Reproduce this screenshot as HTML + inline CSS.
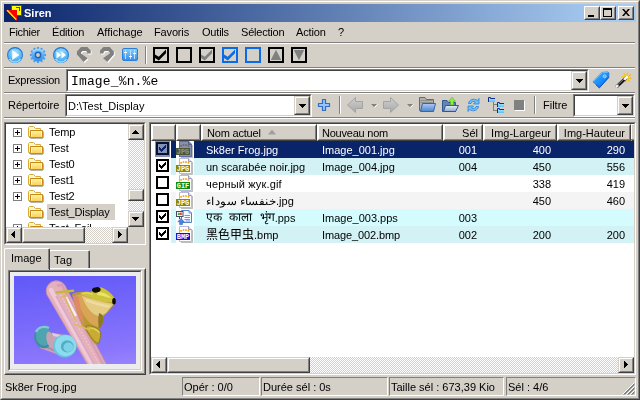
<!DOCTYPE html>
<html><head><meta charset="utf-8"><title>Siren</title>
<style>
*{box-sizing:border-box;margin:0;padding:0}
html,body{width:640px;height:400px;overflow:hidden;background:#d4d0c8}
body{position:relative;font-family:"Liberation Sans","Noto Sans CJK SC",sans-serif;font-size:11px;color:#000;line-height:13px}
.a{position:absolute}
.t{position:absolute;white-space:pre;line-height:13px;height:13px;will-change:transform}
/* frame */
#f1{left:0;top:0;width:640px;height:400px;border:1px solid;border-color:#d4d0c8 #404040 #404040 #d4d0c8}
#f2{left:1px;top:1px;width:638px;height:398px;border:1px solid;border-color:#fff #808080 #808080 #fff}
#title{left:4px;top:4px;width:632px;height:18px;background:linear-gradient(90deg,#0a246a 0%,#a6caf0 95%)}
.tb{position:absolute;top:6px;width:16px;height:14px;background:#d4d0c8;border:1px solid;border-color:#fff #404040 #404040 #fff}
.tb:after{content:"";position:absolute;left:0;top:0;right:0;bottom:0;border:1px solid;border-color:#d4d0c8 #808080 #808080 #d4d0c8}
.hl{position:absolute;height:2px;border-top:1px solid #808080;border-bottom:1px solid #fff}
.vl{position:absolute;width:2px;border-left:1px solid #808080;border-right:1px solid #fff}
.sunk{position:absolute;border:1px solid;border-color:#808080 #fff #fff #808080;background:#fff}
.sunk:before{content:"";position:absolute;left:0;top:0;right:0;bottom:0;border:1px solid;border-color:#404040 #d4d0c8 #d4d0c8 #404040;pointer-events:none}
.btn{position:absolute;background:#d4d0c8;border:1px solid;border-color:#d4d0c8 #404040 #404040 #d4d0c8}
.btn:before{content:"";position:absolute;left:0;top:0;right:0;bottom:0;border:1px solid;border-color:#fff #808080 #808080 #fff}
.trk{position:absolute;background-color:#fff;background-image:conic-gradient(#d4d0c8 25%,#fff 0 50%,#d4d0c8 0 75%,#fff 0);background-size:2px 2px}
.ar{position:absolute;width:0;height:0;border:4px solid transparent}
.stat{position:absolute;top:377px;height:19px;border:1px solid;border-color:#808080 #fff #fff #808080}
.cb{position:absolute;width:13px;height:13px;border:2px solid #000;background:#fff}
.row{position:absolute;left:151px;width:483px;height:17px}
.rc{position:absolute;top:0;height:17px}
</style></head><body>
<div class="a" id="f1"></div><div class="a" id="f2"></div>
<div class="a" id="title"></div>
<!--TITLE-->
<svg class="a" style="left:6px;top:5px" width="16" height="17" viewBox="0 0 16 17" shape-rendering="crispEdges"><rect x="5.5" y="0.5" width="10" height="10" fill="#ffff00" stroke="#ff0000"/><rect x="10" y="2" width="4" height="1" fill="#ff0000"/><rect x="13" y="2" width="1" height="4" fill="#ff0000"/><path d="M0 5H11V16Z" fill="#ff0000" shape-rendering="auto"/><path d="M1.2 5.3L10.2 14.6" stroke="#ffff00" stroke-width="1.3" shape-rendering="auto"/></svg>
<div class="t" style="left:24px;top:7px;color:#fff;font-weight:bold">Siren</div>
<div class="tb" style="left:584px"><i class="a" style="left:3px;top:8px;width:6px;height:2px;background:#000"></i></div>
<div class="tb" style="left:600px"><i class="a" style="left:2px;top:1px;width:9px;height:9px;border:1px solid #000;border-top-width:2px"></i></div>
<div class="tb" style="left:618px"><svg class="a" style="left:3px;top:2px" width="8" height="7" viewBox="0 0 8 7"><path d="M0 0h2l2 2.5L6 0h2L5 3.5 8 7H6L4 4.5 2 7H0l3-3.5z" fill="#000"/></svg></div>

<!--MENU-->
<div class="t" style="left:9px;top:26px;letter-spacing:-0.3px">Fichier</div>
<div class="t" style="left:52px;top:26px;letter-spacing:-0.2px">Édition</div>
<div class="t" style="left:97px;top:26px">Affichage</div>
<div class="t" style="left:154px;top:26px;letter-spacing:-0.15px">Favoris</div>
<div class="t" style="left:202px;top:26px;letter-spacing:-0.2px">Outils</div>
<div class="t" style="left:241px;top:26px;letter-spacing:-0.2px">Sélection</div>
<div class="t" style="left:296px;top:26px;letter-spacing:-0.15px">Action</div>
<div class="t" style="left:338px;top:26px">?</div>
<div class="hl" style="left:4px;top:42px;width:631px"></div>
<div class="hl" style="left:4px;top:67px;width:631px"></div>
<div class="hl" style="left:4px;top:92px;width:631px"></div>
<div class="hl" style="left:4px;top:117px;width:631px"></div>

<!--TOOLBAR1-->
<svg class="a" style="left:4px;top:44px" width="320" height="22" viewBox="0 0 320 22">
<defs>
<radialGradient id="gb" cx="0.5" cy="0.35" r="0.7"><stop offset="0" stop-color="#b0e4ff"/><stop offset="0.6" stop-color="#5cbaf6"/><stop offset="1" stop-color="#3498ea"/></radialGradient>
<linearGradient id="gb2" x1="0" y1="0" x2="0" y2="1"><stop offset="0" stop-color="#88d0ff"/><stop offset="1" stop-color="#348cea"/></linearGradient>
</defs>
<!-- play -->
<circle cx="11" cy="11" r="7.500" fill="url(#gb)" stroke="#2c84e0" stroke-width="1.100"/>
<path d="M4.500 7.500A7.500 7.500 0 0 1 17.500 7.500" fill="none" stroke="#1c6cd0" stroke-width="1" opacity="0.700"/>
<path d="M5.500 15A6.500 6.500 0 0 0 16.500 15" fill="none" stroke="#a8e4ff" stroke-width="1.400" opacity="0.900"/>
<path d="M8.500 6.500L15 11L8.500 15.500Z" fill="#fff" stroke="#eef8ff" stroke-width="0.600"/>
<!-- gear -->
<g transform="translate(34 11)">
<g fill="#4c9ef0"><rect x="-1.150" y="-8.100" width="2.300" height="16.200" rx="0.600" transform="rotate(0)"/><rect x="-1.150" y="-8.100" width="2.300" height="16.200" rx="0.600" transform="rotate(30)"/><rect x="-1.150" y="-8.100" width="2.300" height="16.200" rx="0.600" transform="rotate(60)"/><rect x="-1.150" y="-8.100" width="2.300" height="16.200" rx="0.600" transform="rotate(90)"/><rect x="-1.150" y="-8.100" width="2.300" height="16.200" rx="0.600" transform="rotate(120)"/><rect x="-1.150" y="-8.100" width="2.300" height="16.200" rx="0.600" transform="rotate(150)"/></g>
<circle r="6.300" fill="url(#gb2)"/><circle r="3.400" fill="#1c64bc"/><circle r="1.900" fill="#d4d0c8"/>
<path d="M-5 -3A6 6 0 0 1 5 -3" fill="none" stroke="#a8dcff" stroke-width="1.200" opacity="0.700"/>
</g>
<!-- ff -->
<circle cx="57" cy="11" r="7.500" fill="url(#gb)" stroke="#2c84e0" stroke-width="1.100"/>
<path d="M50.500 7.500A7.500 7.500 0 0 1 63.500 7.500" fill="none" stroke="#1c6cd0" stroke-width="1" opacity="0.700"/>
<path d="M51.500 15A6.500 6.500 0 0 0 62.500 15" fill="none" stroke="#a8e4ff" stroke-width="1.400" opacity="0.900"/>
<path d="M52.500 7.500L57 11L52.500 14.500ZM57.500 7.500L62 11L57.500 14.500Z" fill="#fff"/>
<!-- undo -->
<polygon points="72.9,7.5 77,3 83.4,3 86.75,6.4 86.75,9.6 83.2,9.6 83.2,8 82,7 78.5,7 77,8.5 77,9.6 83.75,14.25 79.6,18 72.9,10.5" fill="#fff" transform="translate(0.9 0.9)"/>
<polygon points="72.9,7.5 77,3 83.4,3 86.75,6.4 86.75,9.6 83.2,9.6 83.2,8 82,7 78.5,7 77,8.5 77,9.6 83.75,14.25 79.6,18 72.9,10.5" fill="#808080"/>
<polygon points="109.90,7.5 105.80,3.0 99.40,3.0 96.05,6.4 96.05,9.6 99.60,9.6 99.60,8.0 100.80,7.0 104.30,7.0 105.80,8.5 105.80,9.6 99.05,14.25 103.20,18.0 109.90,10.5" fill="#fff" transform="translate(0.9 0.9)"/>
<polygon points="109.90,7.5 105.80,3.0 99.40,3.0 96.05,6.4 96.05,9.6 99.60,9.6 99.60,8.0 100.80,7.0 104.30,7.0 105.80,8.5 105.80,9.6 99.05,14.25 103.20,18.0 109.90,10.5" fill="#808080"/>
<!-- settings -->
<rect x="118.5" y="4.5" width="15" height="12" rx="1.5" fill="url(#gb2)" stroke="#2a80d8"/>
<g stroke="#b8e0ff" stroke-width="1" shape-rendering="crispEdges"><path d="M121.500 6V15M126.500 6V15M130.500 6V15"/><path d="M120 8.500H123M125 12.500H128M129 9.500H132" stroke="#fff" stroke-width="1.600"/></g>
<!-- sep -->
<rect x="141" y="2" width="1" height="18" fill="#808080"/><rect x="142" y="2" width="1" height="18" fill="#fff"/>
<!-- checkboxes -->
<g fill="none" stroke="#000" stroke-width="2" shape-rendering="crispEdges">
<rect x="150" y="4" width="14" height="14"/><rect x="173" y="4" width="14" height="14"/><rect x="196" y="4" width="14" height="14"/>
<rect x="265" y="4" width="14" height="14"/><rect x="288" y="4" width="14" height="14"/>
<rect x="219" y="4" width="14" height="14" stroke="#0a6ae8"/><rect x="242" y="4" width="14" height="14" stroke="#0a6ae8"/>
</g>
<polygon points="151.0,10.4 154.8,12.7 162.0,5.5 162.0,9.2 154.8,16.5 151.0,14" fill="#000"/>
<polygon points="197.0,10.4 200.8,12.7 208.0,5.5 208.0,9.2 200.8,16.5 197.0,14" fill="#808080"/>
<polygon points="220.0,10.4 223.8,12.7 231.0,5.5 231.0,9.2 223.8,16.5 220.0,14" fill="#0a6ae8"/>
<path d="M266.800 16H277.200L272 5.800Z" fill="#808080"/>
<path d="M289.800 6H300.200L295 16.200Z" fill="#808080"/>
</svg>

<!--EXPR-->
<div class="t" style="left:8px;top:74px;letter-spacing:-0.25px">Expression</div>
<div class="sunk" style="left:66px;top:69px;width:523px;height:23px"></div>
<div class="t" style="left:71px;top:74px;letter-spacing:0.15px;font-family:'Liberation Mono',monospace;font-size:13px;line-height:15px;height:15px">Image_%n.%e</div>
<div class="btn" style="left:571px;top:71px;width:16px;height:19px"><svg class="a" style="left:4px;top:7px" width="7" height="4" fill="#000" shape-rendering="crispEdges"><rect x="0" y="0" width="7" height="1"/><rect x="1" y="1" width="5" height="1"/><rect x="2" y="2" width="3" height="1"/><rect x="3" y="3" width="1" height="1"/></svg></div>
<svg class="a" style="left:592px;top:71px" width="42" height="20" viewBox="0 0 42 20">
<defs><linearGradient id="tg" x1="0" y1="0" x2="1" y2="1"><stop offset="0" stop-color="#48b0ff"/><stop offset="0.5" stop-color="#1c90fc"/><stop offset="1" stop-color="#0860dc"/></linearGradient></defs>
<path d="M1 10.750L10 1.400L16 1L16.800 2.200V6.300L7.400 16.800Z" fill="url(#tg)" stroke="#1c70e0" stroke-width="0.800" stroke-linejoin="round"/>
<path d="M1.300 10.500L10.200 1.800L15.800 1.400" fill="none" stroke="#70c4ff" stroke-width="0.900"/>
<path d="M16.800 6.300L7.400 16.800L4 13.800" fill="none" stroke="#0848c8" stroke-width="0.900"/>
<circle cx="12.700" cy="5.300" r="1.500" fill="#58b0ff" stroke="#c8e8ff" stroke-width="0.700"/>
<path d="M36.07 6.70L39.11 7.31M35.43 7.65L37.14 10.23M34.30 7.87L33.69 10.91M33.35 7.23L30.77 8.94M33.13 6.10L30.09 5.49M33.77 5.15L32.06 2.57M34.90 4.93L35.51 1.89M35.85 5.57L38.43 3.86" stroke="#f8c020" stroke-width="1.400" stroke-linecap="round"/>
<circle cx="34.6" cy="6.4" r="2.600" fill="#f8c828"/>
<path d="M25 15.300L33.500 7.300" stroke="#181818" stroke-width="3.200" stroke-linecap="round"/>
<path d="M25.500 14L33 7" stroke="#8c8c8c" stroke-width="1"/>
<path d="M24.600 15.700L25.400 14.900" stroke="#f4f4f4" stroke-width="2.600" stroke-linecap="round"/>
<path d="M33 7.800L34.800 6.100" stroke="#fafafa" stroke-width="2.600" stroke-linecap="round"/>
</svg>

<!--DIR-->
<div class="t" style="left:8px;top:99px">Répertoire</div>
<div class="sunk" style="left:65px;top:94px;width:247px;height:23px"></div>
<div class="t" style="left:68px;top:100px">D:\Test_Display</div>
<div class="btn" style="left:294px;top:96px;width:16px;height:19px"><svg class="a" style="left:4px;top:7px" width="7" height="4" fill="#000" shape-rendering="crispEdges"><rect x="0" y="0" width="7" height="1"/><rect x="1" y="1" width="5" height="1"/><rect x="2" y="2" width="3" height="1"/><rect x="3" y="3" width="1" height="1"/></svg></div>
<svg class="a" style="left:314px;top:94px" width="226" height="22" viewBox="0 0 226 22">
<defs>
<linearGradient id="fg" x1="0" y1="0" x2="0" y2="1"><stop offset="0" stop-color="#b0ccf0"/><stop offset="1" stop-color="#4c84d0"/></linearGradient>
<linearGradient id="fg2" x1="0" y1="0" x2="0" y2="1"><stop offset="0" stop-color="#e8eef8"/><stop offset="1" stop-color="#8ca8d4"/></linearGradient><linearGradient id="ag" x1="0" y1="0" x2="0" y2="1"><stop offset="0" stop-color="#d0d0d0"/><stop offset="1" stop-color="#a8a8a8"/></linearGradient>
</defs>
<!-- plus -->
<path d="M8.500 5.500H11.500V9.500H15.500V12.500H11.500V16.500H8.500V12.500H4.500V9.500H8.500Z" fill="#98c4f8" stroke="#2e6cc8" stroke-width="1.200" stroke-linejoin="round"/>
<rect x="25" y="2" width="1" height="18" fill="#808080"/><rect x="26" y="2" width="1" height="18" fill="#fff"/>
<!-- back -->
<path d="M33.500 11L41.500 3.500V7.500H48.500V14.500H41.500V18.500Z" fill="url(#ag)" stroke="#a4a4a4" stroke-width="1"/>
<path d="M57 10H63L60 13Z" fill="#808080"/><path d="M60.5 13.5L63.5 10.5" stroke="#fff" stroke-width="1"/>
<!-- fwd -->
<path d="M84.500 11L76.500 3.500V7.500H69.500V14.500H76.500V18.500Z" fill="url(#ag)" stroke="#a4a4a4" stroke-width="1"/>
<path d="M93 10H99L96 13Z" fill="#808080"/><path d="M96.5 13.5L99.5 10.5" stroke="#fff" stroke-width="1"/>
<!-- folder -->
<path d="M105.500 3.500H111L112.500 5.500H119.500V16.500H105.500Z" fill="#b0b0b0" stroke="#686868"/>
<path d="M106.500 6.500H118.500M106.500 8.500H118.500" stroke="#909090" stroke-width="1"/>
<path d="M108.500 9.500H121.500L119.500 17.500H106.500Z" fill="url(#fg)" stroke="#3464b4"/>
<!-- folder up -->
<path d="M128.500 6.500H133L134.500 8.500H141.500V17.500H128.500Z" fill="#6484b4" stroke="#305890"/>
<path d="M131.500 11.500H144.500L141.500 17.500H129.500Z" fill="url(#fg2)" stroke="#305890"/>
<path d="M138 3.300L141.300 7.300H139.500V11H136.500V7.300H134.700Z" fill="#90f040" stroke="#48b020" stroke-width="0.600"/>
<!-- refresh -->
<path d="M154.5 9.5C155 5.5 160 4 163.5 6.5L165 4.5V10H159.5L161.5 8C159.5 7 157.5 7.5 157 9.5Z" fill="#70c0f8" stroke="#2a80d8" stroke-width="0.800"/>
<path d="M164.5 12.5C164 16.5 159 18 155.5 15.5L154 17.5V12H159.5L157.5 14C159.5 15 161.5 14.5 162 12.500Z" fill="#70c0f8" stroke="#2a80d8" stroke-width="0.800"/>
<!-- tree -->
<path d="M179.500 8V16.500M179.500 10.500H183M179.500 16H183" stroke="#808080" fill="none" shape-rendering="crispEdges"/>
<rect x="175" y="4.5" width="6" height="3.500" fill="#8cdcff"/><rect x="175" y="6.5" width="6" height="1.500" fill="#68c4f8"/><path d="M174.5 8V3.5H176.5V4.5H181" fill="none" stroke="#0a2ca0" stroke-width="1"/><rect x="184" y="9.5" width="6" height="3.500" fill="#8cdcff"/><rect x="184" y="11.5" width="6" height="1.500" fill="#68c4f8"/><path d="M183.5 13V8.5H185.5V9.5H190" fill="none" stroke="#0a2ca0" stroke-width="1"/><rect x="184" y="15.5" width="6" height="3.500" fill="#8cdcff"/><rect x="184" y="17.5" width="6" height="1.500" fill="#68c4f8"/><path d="M183.5 19V14.5H185.5V15.5H190" fill="none" stroke="#0a2ca0" stroke-width="1"/>
<!-- stop -->
<rect x="201" y="7" width="10" height="10" fill="#fff"/><rect x="200" y="6" width="10" height="10" fill="#808080"/>
<rect x="220" y="2" width="1" height="18" fill="#808080"/><rect x="221" y="2" width="1" height="18" fill="#fff"/>
</svg>
<div class="t" style="left:543px;top:99px">Filtre</div>
<div class="sunk" style="left:573px;top:94px;width:62px;height:23px"></div>
<div class="btn" style="left:617px;top:96px;width:16px;height:19px"><svg class="a" style="left:4px;top:7px" width="7" height="4" fill="#000" shape-rendering="crispEdges"><rect x="0" y="0" width="7" height="1"/><rect x="1" y="1" width="5" height="1"/><rect x="2" y="2" width="3" height="1"/><rect x="3" y="3" width="1" height="1"/></svg></div>

<!--TREE-->
<svg width="0" height="0" style="position:absolute"><defs>
<linearGradient id="fy" x1="0" y1="0" x2="0" y2="1"><stop offset="0" stop-color="#fff4a8"/><stop offset="1" stop-color="#f8d050"/></linearGradient>
<g id="fold"><path d="M0.500 11.500V2.500L1.500 1.500H5.500L7.500 3.500H12.500V6.500H2.500V12Z" fill="#fff6c0" stroke="#dcaa3c" stroke-linejoin="round"/><path d="M2.500 5.500H14.500V12.500H1.500L2.500 11Z" fill="url(#fy)" stroke="#c48c1c" stroke-linejoin="round"/><path d="M3.500 6.500V11.500M13.500 6.500V11.500" stroke="#fffbe0" stroke-width="1" opacity="0.800"/><path d="M2.500 13.500H15M15.500 6.500V13" stroke="#807868" stroke-width="1" opacity="0.550"/></g>
<g id="plus"><rect x="0.500" y="0.500" width="8" height="8" fill="#fff" stroke="#808080"/><path d="M2 4.500H7M4.500 2V7" stroke="#000"/></g>
</defs></svg>
<div class="sunk" style="left:4px;top:122px;width:142px;height:123px"></div>
<div class="a" style="left:6px;top:124px;width:122px;height:103px;overflow:hidden;background:#fff">
<svg class="a" style="left:7px;top:4px" width="9" height="9"><use href="#plus"/></svg><svg class="a" style="left:22px;top:1px" width="16" height="14" viewBox="0 0 16 14"><use href="#fold"/></svg><div class="t" style="left:43px;top:2px;letter-spacing:-0.15px">Temp</div><svg class="a" style="left:7px;top:20px" width="9" height="9"><use href="#plus"/></svg><svg class="a" style="left:22px;top:17px" width="16" height="14" viewBox="0 0 16 14"><use href="#fold"/></svg><div class="t" style="left:43px;top:18px;letter-spacing:-0.15px">Test</div><svg class="a" style="left:7px;top:36px" width="9" height="9"><use href="#plus"/></svg><svg class="a" style="left:22px;top:33px" width="16" height="14" viewBox="0 0 16 14"><use href="#fold"/></svg><div class="t" style="left:43px;top:34px;letter-spacing:-0.15px">Test0</div><svg class="a" style="left:7px;top:52px" width="9" height="9"><use href="#plus"/></svg><svg class="a" style="left:22px;top:49px" width="16" height="14" viewBox="0 0 16 14"><use href="#fold"/></svg><div class="t" style="left:43px;top:50px;letter-spacing:-0.15px">Test1</div><svg class="a" style="left:7px;top:68px" width="9" height="9"><use href="#plus"/></svg><svg class="a" style="left:22px;top:65px" width="16" height="14" viewBox="0 0 16 14"><use href="#fold"/></svg><div class="t" style="left:43px;top:66px;letter-spacing:-0.15px">Test2</div><svg class="a" style="left:22px;top:81px" width="16" height="14" viewBox="0 0 16 14"><use href="#fold"/></svg><div class="a" style="left:41px;top:80px;width:68px;height:16px;background:#d4d0c8"></div><div class="t" style="left:43px;top:82px;letter-spacing:-0.15px">Test_Display</div><svg class="a" style="left:7px;top:100px" width="9" height="9"><use href="#plus"/></svg><svg class="a" style="left:22px;top:97px" width="16" height="14" viewBox="0 0 16 14"><use href="#fold"/></svg><div class="t" style="left:43px;top:98px;letter-spacing:-0.15px">Test_Fail</div></div>
<div class="trk" style="left:128px;top:124px;width:16px;height:103px"></div>
<div class="btn" style="left:128px;top:124px;width:16px;height:16px"><svg class="a" style="left:3px;top:5px" width="7" height="4" fill="#000" shape-rendering="crispEdges"><rect x="3" y="0" width="1" height="1"/><rect x="2" y="1" width="3" height="1"/><rect x="1" y="2" width="5" height="1"/><rect x="0" y="3" width="7" height="1"/></svg></div>
<div class="btn" style="left:128px;top:189px;width:16px;height:12px"></div>
<div class="btn" style="left:128px;top:211px;width:16px;height:16px"><svg class="a" style="left:3px;top:5px" width="7" height="4" fill="#000" shape-rendering="crispEdges"><rect x="0" y="0" width="7" height="1"/><rect x="1" y="1" width="5" height="1"/><rect x="2" y="2" width="3" height="1"/><rect x="3" y="3" width="1" height="1"/></svg></div>
<div class="trk" style="left:6px;top:227px;width:122px;height:16px"></div>
<div class="btn" style="left:6px;top:227px;width:16px;height:16px"><svg class="a" style="left:4px;top:3px" width="4" height="7" fill="#000" shape-rendering="crispEdges"><rect x="3" y="0" width="1" height="7"/><rect x="2" y="1" width="1" height="5"/><rect x="1" y="2" width="1" height="3"/><rect x="0" y="3" width="1" height="1"/></svg></div>
<div class="btn" style="left:22px;top:227px;width:63px;height:16px"></div>
<div class="btn" style="left:112px;top:227px;width:16px;height:16px"><svg class="a" style="left:5px;top:3px" width="4" height="7" fill="#000" shape-rendering="crispEdges"><rect x="0" y="0" width="1" height="7"/><rect x="1" y="1" width="1" height="5"/><rect x="2" y="2" width="1" height="3"/><rect x="3" y="3" width="1" height="1"/></svg></div>
<div class="a" style="left:128px;top:227px;width:16px;height:16px;background:#d4d0c8"></div>

<!--TABS-->
<!-- tab body -->
<div class="a" style="left:4px;top:268px;width:142px;height:107px;border:1px solid;border-color:#fff #404040 #404040 #fff"></div>
<div class="a" style="left:5px;top:269px;width:140px;height:105px;border:1px solid;border-color:#d4d0c8 #808080 #808080 #d4d0c8"></div>
<!-- tab Tag -->
<div class="a" style="left:49px;top:250px;width:41px;height:18px;border:1px solid;border-color:#fff #404040 transparent #fff;border-bottom:0;border-radius:2px 2px 0 0"></div>
<div class="a" style="left:50px;top:251px;width:39px;height:17px;border-right:1px solid #808080"></div>
<div class="t" style="left:53.500px;top:254px;letter-spacing:0.2px">Tag</div>
<!-- tab Image (selected) -->
<div class="a" style="left:4px;top:248px;width:46px;height:22px;background:#d4d0c8;border:1px solid;border-color:#fff #404040 transparent #fff;border-bottom:0;border-radius:2px 2px 0 0"></div>
<div class="a" style="left:5px;top:249px;width:44px;height:20px;border-right:1px solid #808080"></div>
<div class="t" style="left:11px;top:252px">Image</div>
<!-- inner sunken -->
<div class="a" style="left:8px;top:270px;width:134px;height:101px;border:1px solid;border-color:#808080 #fff #fff #808080"></div>
<div class="a" style="left:9px;top:271px;width:132px;height:99px;border:1px solid;border-color:#404040 #d4d0c8 #d4d0c8 #404040;background:#ececec"></div>
<svg class="a" style="left:14px;top:276px" width="122" height="88" viewBox="0 0 122 88">
<defs>
<linearGradient id="bg1" x1="0" y1="0" x2="0.217" y2="1.26"><stop offset="0" stop-color="#6058f8"/><stop offset="0.75" stop-color="#8a76fc"/><stop offset="1" stop-color="#a08cfc"/></linearGradient>
<linearGradient id="bd" x1="0" y1="0" x2="1" y2="0"><stop offset="0" stop-color="#f0b8c8"/><stop offset="0.5" stop-color="#e8a0b4"/><stop offset="1" stop-color="#d8a0b8"/></linearGradient>
<radialGradient id="wh" cx="0.45" cy="0.45" r="0.6"><stop offset="0" stop-color="#58a8d8"/><stop offset="0.35" stop-color="#8cd4f4"/><stop offset="1" stop-color="#a4e0fc"/></radialGradient>
<filter id="bl"><feGaussianBlur stdDeviation="0.5"/></filter>
</defs>
<rect width="122" height="88" fill="url(#bg1)"/>
<g filter="url(#bl)">
<!-- board -->
<path d="M32.800 18.500L79.500 98.800L93.800 91.200L50.700 9.100A10.200 10.200 0 0 0 32.800 18.500Z" fill="#e4b0bc" stroke="#c090b0" stroke-width="1"/>
<path d="M37 14L80 92" stroke="#f2d0e0" stroke-width="4.500" stroke-linecap="round" opacity="0.800"/>
<path d="M43 9.500L48 9L90 90" stroke="#d498b4" stroke-width="2.500" fill="none" opacity="0.800"/>
<path d="M42 20L81 90" stroke="#cc90b0" stroke-width="1.500" fill="none" opacity="0.600"/>
<path d="M45 16L86 90" stroke="#f4dce8" stroke-width="1" stroke-dasharray="1.500 2" fill="none" opacity="0.800"/>
<!-- axle -->
<path d="M30 55L50 59L45 79L26 72Z" fill="#c8a4b8"/>
<path d="M32 57L49 61" stroke="#e4ccd8" stroke-width="2.500"/>
<path d="M28 69L44 76" stroke="#b08ca8" stroke-width="2"/>
<!-- wheels -->
<ellipse cx="29.500" cy="61.500" rx="9.300" ry="10.800" fill="#3e8e9c" transform="rotate(-10 29.500 61.500)"/>
<ellipse cx="30" cy="60.500" rx="8" ry="9.300" fill="#50a4b0" transform="rotate(-10 30 60.500)"/>
<path d="M22 56C24 51 30 49.500 35 52" stroke="#7cccd4" stroke-width="2.200" fill="none"/>
<ellipse cx="36.500" cy="64" rx="3.800" ry="8.500" fill="#c4a4b4" transform="rotate(-14 36.500 64)"/>
<ellipse cx="50.800" cy="69.900" rx="11.800" ry="11.500" fill="#6cc4dc"/>
<ellipse cx="51.600" cy="69.600" rx="10.600" ry="10.600" fill="#8cdcf0"/>
<ellipse cx="53.300" cy="70.400" rx="6.400" ry="6.200" fill="#56acc6"/>
<ellipse cx="54.400" cy="71.300" rx="4.900" ry="4.700" fill="#7cd2e6"/>
<!-- frog -->
<path d="M58 18C62 15.500 70 15 77 16.500C78 11.500 85 9.500 90 12.500C96 15.500 101.500 21 101.500 26C100.500 29.500 98 31 96.500 33C94.500 37 90 38 89.500 42C89 46 88.500 50 85 53C86.500 58 86 63 84.500 67C83 69.500 81 68.500 79 66C76 62 74 58 71.500 54C67 48 62 36 58 18Z" fill="#b89830"/>
<path d="M62 19C66 17.500 72 17.500 77 19C83 21 88 24 90 30C90 38 88 46 84 51C78 50 72 44 68 36C65 30 63 24 62 19Z" fill="#d8a454"/>
<path d="M66 17.500C70 15.500 75 15.500 77 16.500C79 11.500 86 10 90.500 13C96 16 101.500 21.500 101 26C96 27.500 86 26 78 22.500C74 21 70 19.500 66 17.500Z" fill="#ccc43c"/>
<path d="M84 16C89 15.500 94 18.500 98 22.500C93.500 21 88 19.500 83 19Z" fill="#ece468"/><path d="M68 17.500C72 16.500 76 17 79 18.500" stroke="#e4dc5c" stroke-width="1.200" fill="none"/>
<path d="M68 20C76 22.500 90 27 99.500 27.500C98 30.500 96 32 94.500 34C92 38 88 40 84 40C78 38 72 32 68 20Z" fill="#e4cc84"/><path d="M72 24C80 27 90 30 96 30.500" stroke="#f0e0a4" stroke-width="2.500" fill="none" opacity="0.800"/>
<path d="M58.500 19.500C60.500 31 65 41 71 51C69.500 43 66 31 64.500 21Z" fill="#e08a64"/>
<path d="M85 37C88 38 90 40 89.500 43C89 47 88 50 85 53C84 48 84 42 85 37Z" fill="#8a7a24"/>
<path d="M72 50C76 49 84 51 86.500 56C87 61 86 65 84 67.500C80 66 76 60 72.500 54Z" fill="#c8ac30" stroke="#84701c" stroke-width="0.800"/>
<path d="M75 52C79 52 84 54 85.500 57" stroke="#e8d460" stroke-width="1.200" fill="none"/>
<ellipse cx="82.300" cy="13.800" rx="4.400" ry="2.700" fill="#100c06" transform="rotate(-10 82.300 13.800)"/>
<ellipse cx="100" cy="25.300" rx="1.800" ry="3.200" fill="#100c06"/>
<path d="M52 21L62 40" stroke="#fff4f4" stroke-width="2.600" fill="none" opacity="0.900"/><path d="M42.500 16.500L59 14.800" stroke="#c8b834" stroke-width="2.600" stroke-linecap="round" fill="none"/><path d="M46 22L53 19M50 19L62 46M60 48L76 54" stroke="#dcb860" stroke-width="1.600" fill="none"/>
</g>
</svg>

<!--LIST-->
<svg width="0" height="0" style="position:absolute"><defs>
<g id="page"><path d="M3.500 0.500H12.500L15.500 3.500V15.500H3.500Z" fill="#fff" stroke="#b8b8d8"/><path d="M12.500 0.500V3.500H15.500" fill="#e0e0f0" stroke="#9898b8"/><path d="M16.500 4V16.500H5" stroke="#909090" fill="none" opacity="0.600"/><g fill="#f8a010"><rect x="4.300" y="4" width="1.600" height="1.700"/><rect x="6.700" y="3.200" width="1.600" height="1.700"/><rect x="9.200" y="3.200" width="1.600" height="1.700"/><rect x="11.700" y="4" width="1.600" height="1.700"/></g></g>
</defs></svg>
<div class="sunk" style="left:149px;top:122px;width:487px;height:253px"></div>
<!-- header -->
<div class="a" style="left:151px;top:124px;width:483px;height:17px;background:#d4d0c8"></div>
<div class="btn" style="left:151px;top:124px;width:25px;height:17px;border-color:#fff #404040 #404040 #fff"></div><div class="btn" style="left:176px;top:124px;width:25px;height:17px;border-color:#fff #404040 #404040 #fff"></div><div class="btn" style="left:201px;top:124px;width:116px;height:17px;border-color:#fff #404040 #404040 #fff"></div><div class="btn" style="left:317px;top:124px;width:126px;height:17px;border-color:#fff #404040 #404040 #fff"></div><div class="btn" style="left:443px;top:124px;width:40px;height:17px;border-color:#fff #404040 #404040 #fff"></div><div class="btn" style="left:483px;top:124px;width:74px;height:17px;border-color:#fff #404040 #404040 #fff"></div><div class="btn" style="left:557px;top:124px;width:74px;height:17px;border-color:#fff #404040 #404040 #fff"></div><div class="a" style="left:631px;top:124px;width:3px;height:17px;border-top:1px solid #fff;border-left:1px solid #fff;border-bottom:1px solid #404040"></div><div class="a" style="left:631px;top:139px;width:3px;height:1px;background:#808080"></div><div class="t" style="left:206.500px;top:127px;letter-spacing:-0.2px">Nom actuel</div>
<div class="t" style="left:322px;top:127px;letter-spacing:-0.22px">Nouveau nom</div>
<div class="t" style="left:443px;top:127px;width:35px;text-align:right">Sél</div>
<div class="t" style="left:483px;top:127px;width:68px;text-align:right">Img-Largeur</div>
<div class="t" style="left:557px;top:127px;width:68px;text-align:right">Img-Hauteur</div>
<svg class="a" style="left:267px;top:129px" width="10" height="6"><path d="M1 5.500L5 0.500L9 5.500Z" fill="#a0a0a0"/></svg>
<div class="row" style="top:141px;color:#fff"><div class="rc" style="left:20px;width:5px;background:#0a246a"></div><div class="rc" style="left:43px;width:440px;background:#0a246a"></div><div class="rc" style="left:4px;width:15px;height:16px;background:#8491b4"></div><div class="cb" style="left:5px;top:1px;border-color:#051235;background:#8491b4"><svg class="a" style="left:1px;top:1px" width="7" height="7" shape-rendering="crispEdges"><polygon points="0,2 1,2 1,3 2,3 2,4 3,4 3,3 4,3 4,2 5,2 5,1 6,1 6,0 7,0 7,3 6,3 6,4 5,4 5,5 4,5 4,6 3,6 3,7 2,7 2,6 1,6 1,5 0,5" fill="#0a246a"/></svg></div><svg class="a" style="left:25px;top:0" width="18" height="17" viewBox="0 0 18 17"><g><use href="#page"/><rect x="0" y="7" width="14" height="7" fill="#8a8a00"/><text x="7" y="13" font-family="Liberation Mono,monospace" font-size="7.500" font-weight="bold" fill="#fff" text-anchor="middle" textLength="12.500" lengthAdjust="spacingAndGlyphs">JPG</text><path d="M3 0H13L16 3V16H3V14H0V7H3Z" fill="#0a246a" opacity="0.5"/></g></svg><div class="t" style="left:55.400px;top:3px">Sk8er Frog.jpg</div><div class="t" style="left:171px;top:3px">Image_001.jpg</div><div class="t" style="left:292px;top:3px;width:34px;text-align:right">001</div><div class="t" style="left:332px;top:3px;width:68px;text-align:right">400</div><div class="t" style="left:406px;top:3px;width:68px;text-align:right">290</div></div>
<div class="row" style="top:158px;color:#000"><div class="rc" style="left:20px;width:5px;background:#d2f2f5"></div><div class="rc" style="left:43px;width:440px;background:#d2f2f5"></div><div class="cb" style="left:5px;top:1px;border-color:#000;background:#fff"><svg class="a" style="left:1px;top:1px" width="7" height="7" shape-rendering="crispEdges"><polygon points="0,2 1,2 1,3 2,3 2,4 3,4 3,3 4,3 4,2 5,2 5,1 6,1 6,0 7,0 7,3 6,3 6,4 5,4 5,5 4,5 4,6 3,6 3,7 2,7 2,6 1,6 1,5 0,5" fill="#000"/></svg></div><svg class="a" style="left:25px;top:0" width="18" height="17" viewBox="0 0 18 17"><g><use href="#page"/><rect x="0" y="7" width="14" height="7" fill="#8a8a00"/><text x="7" y="13" font-family="Liberation Mono,monospace" font-size="7.500" font-weight="bold" fill="#fff" text-anchor="middle" textLength="12.500" lengthAdjust="spacingAndGlyphs">JPG</text></g></svg><div class="t" style="left:55.400px;top:3px">un scarabée noir.jpg</div><div class="t" style="left:171px;top:3px">Image_004.jpg</div><div class="t" style="left:292px;top:3px;width:34px;text-align:right">004</div><div class="t" style="left:332px;top:3px;width:68px;text-align:right">450</div><div class="t" style="left:406px;top:3px;width:68px;text-align:right">556</div></div>
<div class="row" style="top:175px;color:#000"><div class="rc" style="left:20px;width:5px;background:#ffffff"></div><div class="rc" style="left:43px;width:440px;background:#ffffff"></div><div class="cb" style="left:5px;top:1px;border-color:#000;background:#fff"></div><svg class="a" style="left:25px;top:0" width="18" height="17" viewBox="0 0 18 17"><g><use href="#page"/><rect x="0" y="7" width="14" height="7" fill="#108a10"/><text x="7" y="13" font-family="Liberation Mono,monospace" font-size="7.500" font-weight="bold" fill="#fff" text-anchor="middle" textLength="12.500" lengthAdjust="spacingAndGlyphs">GIF</text></g></svg><div class="t" style="left:55.400px;top:3px"><span style="letter-spacing:0.15px">черный жук.gif</span></div><div class="t" style="left:171px;top:3px"></div><div class="t" style="left:292px;top:3px;width:34px;text-align:right"></div><div class="t" style="left:332px;top:3px;width:68px;text-align:right">338</div><div class="t" style="left:406px;top:3px;width:68px;text-align:right">419</div></div>
<div class="row" style="top:192px;color:#000"><div class="rc" style="left:20px;width:5px;background:#f4f4f4"></div><div class="rc" style="left:43px;width:440px;background:#f4f4f4"></div><div class="cb" style="left:5px;top:1px;border-color:#000;background:#fff"></div><svg class="a" style="left:25px;top:0" width="18" height="17" viewBox="0 0 18 17"><g><use href="#page"/><rect x="0" y="7" width="14" height="7" fill="#8a8a00"/><text x="7" y="13" font-family="Liberation Mono,monospace" font-size="7.500" font-weight="bold" fill="#fff" text-anchor="middle" textLength="12.500" lengthAdjust="spacingAndGlyphs">JPG</text></g></svg><div class="t" style="left:55.400px;top:3px"><span dir="rtl" style="display:inline-block;transform:scaleX(1.08);transform-origin:0 0;margin-right:5px">خنفساء سوداء</span>.jpg</div><div class="t" style="left:171px;top:3px"></div><div class="t" style="left:292px;top:3px;width:34px;text-align:right"></div><div class="t" style="left:332px;top:3px;width:68px;text-align:right">450</div><div class="t" style="left:406px;top:3px;width:68px;text-align:right">460</div></div>
<div class="row" style="top:209px;color:#000"><div class="rc" style="left:20px;width:5px;background:#d4fcfe"></div><div class="rc" style="left:43px;width:440px;background:#d4fcfe"></div><div class="cb" style="left:5px;top:1px;border-color:#000;background:#fff"><svg class="a" style="left:1px;top:1px" width="7" height="7" shape-rendering="crispEdges"><polygon points="0,2 1,2 1,3 2,3 2,4 3,4 3,3 4,3 4,2 5,2 5,1 6,1 6,0 7,0 7,3 6,3 6,4 5,4 5,5 4,5 4,6 3,6 3,7 2,7 2,6 1,6 1,5 0,5" fill="#000"/></svg></div><svg class="a" style="left:25px;top:0" width="18" height="17" viewBox="0 0 18 17"><path d="M5.500 1.500H13L15.500 4V13.500H5.500Z" fill="#f4f8ff" stroke="#5880c8"/><path d="M13 1.500V4H15.500" fill="none" stroke="#5880c8" stroke-width="0.800"/><path d="M8.500 6.500H14M8.500 8.500H14M8.500 10.500H14M9.500 12H14" stroke="#6c98e4"/><rect x="0.500" y="2.500" width="6.500" height="5" fill="#fff" stroke="#484868"/><rect x="1.800" y="3.800" width="2" height="2.200" fill="#40b040"/><rect x="3.800" y="3.600" width="2" height="2.400" fill="#e04830"/><path d="M3.500 7.500V10" stroke="#484868"/><path d="M5 9.500L8.200 12.700H6.400V15.600H3.600V12.700H1.800Z" fill="#4888e8" stroke="#2c60c0" stroke-width="0.600"/></svg><div class="t" style="left:55.400px;top:3px"><span style="font-size:12px;word-spacing:4px;position:relative;top:-1px">एक काला भृंग</span>.pps</div><div class="t" style="left:171px;top:3px">Image_003.pps</div><div class="t" style="left:292px;top:3px;width:34px;text-align:right">003</div><div class="t" style="left:332px;top:3px;width:68px;text-align:right"></div><div class="t" style="left:406px;top:3px;width:68px;text-align:right"></div></div>
<div class="row" style="top:226px;color:#000"><div class="rc" style="left:20px;width:5px;background:#d2f2f5"></div><div class="rc" style="left:43px;width:440px;background:#d2f2f5"></div><div class="cb" style="left:5px;top:1px;border-color:#000;background:#fff"><svg class="a" style="left:1px;top:1px" width="7" height="7" shape-rendering="crispEdges"><polygon points="0,2 1,2 1,3 2,3 2,4 3,4 3,3 4,3 4,2 5,2 5,1 6,1 6,0 7,0 7,3 6,3 6,4 5,4 5,5 4,5 4,6 3,6 3,7 2,7 2,6 1,6 1,5 0,5" fill="#000"/></svg></div><svg class="a" style="left:25px;top:0" width="18" height="17" viewBox="0 0 18 17"><g><use href="#page"/><rect x="0" y="7" width="14" height="7" fill="#1010e0"/><text x="7" y="13" font-family="Liberation Mono,monospace" font-size="7.500" font-weight="bold" fill="#fff" text-anchor="middle" textLength="12.500" lengthAdjust="spacingAndGlyphs">BMP</text></g></svg><div class="t" style="left:55.400px;top:3px"><span style="font-size:12px">黑色甲虫</span>.bmp</div><div class="t" style="left:171px;top:3px;letter-spacing:-0.12px">Image_002.bmp</div><div class="t" style="left:292px;top:3px;width:34px;text-align:right">002</div><div class="t" style="left:332px;top:3px;width:68px;text-align:right">200</div><div class="t" style="left:406px;top:3px;width:68px;text-align:right">200</div></div>
<!-- hscroll -->
<div class="trk" style="left:151px;top:357px;width:483px;height:16px"></div>
<div class="btn" style="left:151px;top:357px;width:16px;height:16px"><svg class="a" style="left:4px;top:3px" width="4" height="7" fill="#000" shape-rendering="crispEdges"><rect x="3" y="0" width="1" height="7"/><rect x="2" y="1" width="1" height="5"/><rect x="1" y="2" width="1" height="3"/><rect x="0" y="3" width="1" height="1"/></svg></div>
<div class="btn" style="left:167px;top:357px;width:143px;height:16px"></div>
<div class="btn" style="left:618px;top:357px;width:16px;height:16px"><svg class="a" style="left:5px;top:3px" width="4" height="7" fill="#000" shape-rendering="crispEdges"><rect x="0" y="0" width="1" height="7"/><rect x="1" y="1" width="1" height="5"/><rect x="2" y="2" width="1" height="3"/><rect x="3" y="3" width="1" height="1"/></svg></div>

<!--STATUS-->
<div class="t" style="left:5px;top:381px;letter-spacing:-0.05px">Sk8er Frog.jpg</div>
<div class="stat" style="left:182px;width:78px"></div><div class="t" style="left:184px;top:381px">Opér : 0/0</div>
<div class="stat" style="left:261px;width:127px"></div><div class="t" style="left:263px;top:381px">Durée sél : 0s</div>
<div class="stat" style="left:389px;width:115px"></div><div class="t" style="left:391px;top:381px">Taille sél : 673,39 Kio</div>
<div class="stat" style="left:506px;width:130px"></div><div class="t" style="left:508px;top:381px">Sél : 4/6</div>
<svg class="a" style="left:622px;top:382px" width="13" height="13"><g stroke-width="1"><path d="M12.500 0.500L0.500 12.500M12.500 4.500L4.500 12.500M12.500 8.500L8.500 12.500" stroke="#fff"/><path d="M12.500 1.500L1.500 12.500M12.500 2.500L2.500 12.500M12.500 5.500L5.500 12.500M12.500 6.500L6.500 12.500M12.500 9.500L9.500 12.500M12.500 10.500L10.500 12.500" stroke="#808080"/></g></svg>

</body></html>
